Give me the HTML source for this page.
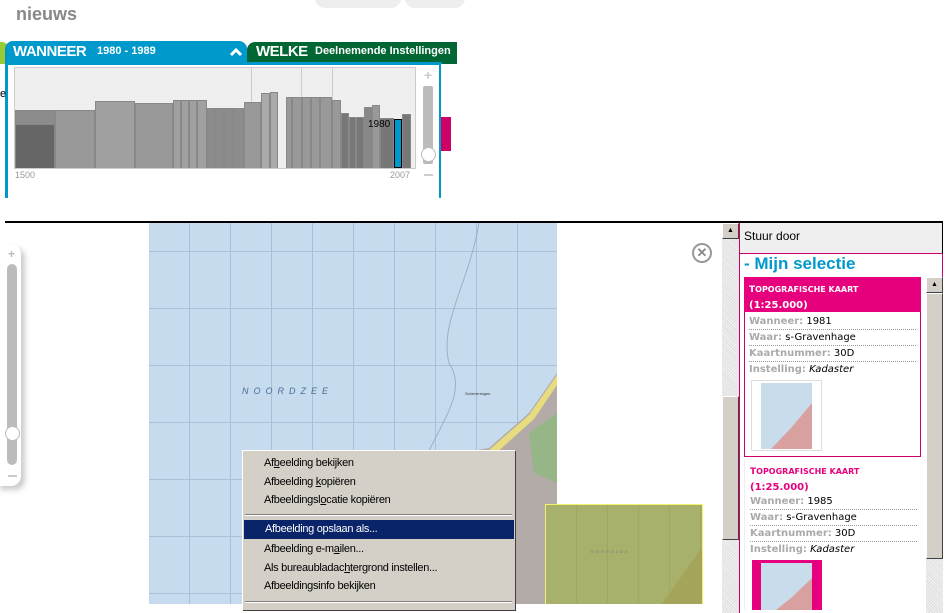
<!DOCTYPE html>
<html><head><meta charset="utf-8"><style>
*{margin:0;padding:0;box-sizing:border-box}
body{width:951px;height:613px;position:relative;background:#fff;font-family:"Liberation Sans",sans-serif;overflow:hidden}
.a{position:absolute}
.bar{position:absolute;bottom:0;border:1px solid #888;border-bottom:none}
.mi{position:absolute;left:0;width:272px;height:19px;font-size:11px;line-height:19px;padding-left:21px;color:#000;letter-spacing:-0.3px}
.row{position:absolute;left:5px;width:167px;height:16px;font-family:"DejaVu Sans",sans-serif;font-size:10px;line-height:15px;border-bottom:1px dotted #999;color:#000}
.row b{color:#aaa}
</style></head><body>
<!-- top -->
<div class="a" style="left:16px;top:4px;font-size:18px;font-weight:bold;color:#888">nieuws</div>
<div class="a" style="left:315px;top:-14px;width:86px;height:22px;border-radius:10px;background:#eee"></div>
<div class="a" style="left:405px;top:-14px;width:60px;height:22px;border-radius:10px;background:#eee"></div>
<div class="a" style="left:0;top:42px;width:8px;height:22px;background:#9c3;border-radius:0 6px 0 0"></div>
<div class="a" style="left:5px;top:41px;width:242px;height:24px;background:#0099cc;border-radius:8px 8px 0 0"></div>
<div class="a" style="left:13px;top:43px;color:#fff;font-weight:bold;font-size:15px;letter-spacing:-0.5px">WANNEER</div>
<div class="a" style="left:97px;top:45px;color:#fff;font-weight:bold;font-size:11px">1980 - 1989</div>
<svg class="a" style="left:229px;top:47px" width="14" height="10"><path d="M2 8 L7 3 L12 8" stroke="#fff" stroke-width="3" fill="none"/></svg>
<div class="a" style="left:247px;top:42px;width:210px;height:22px;background:#006633;border-radius:8px 0 0 0"></div>
<div class="a" style="left:256px;top:43px;color:#fff;font-weight:bold;font-size:15px;letter-spacing:-0.5px">WELKE</div>
<div class="a" style="left:315px;top:45px;color:#fff;font-weight:bold;font-size:11px;white-space:nowrap">Deelnemende Instellingen</div>
<div class="a" style="left:5px;top:62px;width:437px;height:136px;border:3px solid #0099cc;border-bottom:none;background:#fff"></div>
<div class="a" style="left:441px;top:64px;width:10px;height:134px;background:#fff"></div>
<div class="a" style="left:441px;top:117px;width:10px;height:34px;background:#c06"></div>
<div class="a" style="left:0;top:88px;width:5px;font-size:11px">e</div>
<div class="a" style="left:14px;top:67px;width:402px;height:102px;background:#efefef;border:1px solid #ccc;overflow:hidden">
 <div class="a" style="left:236px;top:0;width:1px;height:100px;background:#ccc"></div>
 <div class="a" style="left:286px;top:0;width:1px;height:100px;background:#ccc"></div>
 <div class="a" style="left:317px;top:0;width:1px;height:100px;background:#ccc"></div>
 <div class="bar" style="left:0;width:40px;height:58px;background:#8c8c8c"></div>
 <div class="bar" style="left:0;width:40px;height:44px;background:#666"></div>
 <div class="bar" style="left:40px;width:40px;height:58px;background:#999"></div>
 <div class="bar" style="left:80px;width:40px;height:67px;background:#a0a0a0"></div>
 <div class="bar" style="left:120px;width:38px;height:65px;background:#999"></div>
 <div class="bar" style="left:158px;width:8px;height:68px;background:#a0a0a0"></div>
 <div class="bar" style="left:166px;width:8px;height:68px;background:#a0a0a0"></div>
 <div class="bar" style="left:174px;width:8px;height:68px;background:#a0a0a0"></div>
 <div class="bar" style="left:182px;width:10px;height:68px;background:#a0a0a0"></div>
 <div class="bar" style="left:192px;width:8px;height:60px;background:#8c8c8c"></div>
 <div class="bar" style="left:200px;width:9px;height:60px;background:#8c8c8c"></div>
 <div class="bar" style="left:209px;width:9px;height:60px;background:#8c8c8c"></div>
 <div class="bar" style="left:218px;width:11px;height:60px;background:#8c8c8c"></div>
 <div class="bar" style="left:229px;width:17px;height:66px;background:#999"></div>
 <div class="bar" style="left:246px;width:9px;height:75px;background:#aaa"></div>
 <div class="bar" style="left:255px;width:8px;height:76px;background:#aaa"></div>
 <div class="bar" style="left:271px;width:6px;height:71px;background:#999"></div>
 <div class="bar" style="left:277px;width:10px;height:71px;background:#999"></div>
 <div class="bar" style="left:287px;width:9px;height:71px;background:#999"></div>
 <div class="bar" style="left:296px;width:9px;height:71px;background:#999"></div>
 <div class="bar" style="left:305px;width:12px;height:71px;background:#999"></div>
 <div class="bar" style="left:317px;width:9px;height:68px;background:#999"></div>
 <div class="bar" style="left:326px;width:8px;height:55px;background:#777"></div>
 <div class="bar" style="left:334px;width:7px;height:51px;background:#777"></div>
 <div class="bar" style="left:341px;width:8px;height:51px;background:#777"></div>
 <div class="bar" style="left:349px;width:8px;height:61px;background:#888"></div>
 <div class="bar" style="left:357px;width:8px;height:63px;background:#999"></div>
 <div class="bar" style="left:365px;width:14px;height:50px;background:#777"></div>
 <div class="bar" style="left:379px;width:8px;height:49px;background:#0099cc;border:1px solid #000"></div>
 <div class="bar" style="left:387px;width:9px;height:54px;background:#777"></div>
 <div class="a" style="left:353px;top:51px;font-size:10px">1980</div>
</div>
<div class="a" style="left:15px;top:170px;font-size:9px;color:#999">1500</div>
<div class="a" style="left:390px;top:170px;font-size:9px;color:#999">2007</div>
<div class="a" style="left:424px;top:67px;font-size:14px;font-weight:bold;color:#ccc">+</div>
<div class="a" style="left:423px;top:86px;width:10px;height:78px;background:#bbb;border-radius:2px"></div>
<div class="a" style="left:421px;top:147px;width:15px;height:15px;border-radius:50%;background:#fff;border:1px solid #bbb"></div>
<div class="a" style="left:424px;top:174px;width:9px;height:2px;background:#ccc"></div>
<!-- bottom line -->
<div class="a" style="left:5px;top:221px;width:938px;height:2px;background:#000"></div>
<!-- left slider -->
<div class="a" style="left:-4px;top:244px;width:25px;height:242px;background:#fff;border-radius:0 10px 10px 0;box-shadow:4px 4px 6px #ccc"></div>
<div class="a" style="left:8px;top:247px;font-size:12px;font-weight:bold;color:#bbb">+</div>
<div class="a" style="left:7px;top:264px;width:10px;height:201px;background:#bbb;border-radius:5px"></div>
<div class="a" style="left:5px;top:426px;width:15px;height:15px;border-radius:50%;background:#fff;border:1px solid #bbb"></div>
<div class="a" style="left:8px;top:475px;width:9px;height:2px;background:#ccc"></div>
<!-- map -->
<div class="a" style="left:149px;top:223px;width:408px;height:381px;background:#c6dcee;background-image:repeating-linear-gradient(90deg,transparent 0,transparent 40px,#a9bfd6 40px,#a9bfd6 41px),repeating-linear-gradient(180deg,transparent 0,transparent 28px,#abc0d6 28px,#abc0d6 29px,transparent 29px,transparent 57px);overflow:hidden">
 <svg class="a" style="left:0;top:0" width="408" height="381">
  <path d="M330 0 C320 60 290 100 300 140 C320 170 290 200 270 250 C250 300 200 330 150 360 C120 370 100 380 95 381" stroke="#9bb0c6" fill="none"/>
  <polygon points="408,150 380,190 340,225 300,232 285,300 272,381 408,381" fill="#b3aba8"/>
  <polygon points="408,140 408,152 380,192 340,227 302,234 288,300 290,305 306,240 345,232 385,196 408,162" fill="#e8dc80"/>
  <polygon points="380,210 408,190 408,260 385,250" fill="#8cba7a" opacity="0.7"/>
  <text x="93" y="171" font-family="Liberation Sans" font-style="italic" font-size="9" fill="#4a6f95" letter-spacing="5">NOORDZEE</text>
  <text x="316" y="172" font-family="Liberation Sans" font-size="4" fill="#333">Scheveningen</text>
 </svg>
</div>
<!-- close icon -->
<div class="a" style="left:692px;top:243px;width:20px;height:20px;border-radius:50%;border:2px solid #999;color:#888;font-size:13px;font-weight:bold;text-align:center;line-height:16px">✕</div>
<!-- minimap -->
<div class="a" style="left:545px;top:504px;width:158px;height:100px;background:#a8b16c;border:1px solid #f5f06a;border-bottom:none;overflow:hidden;background-image:repeating-linear-gradient(90deg,transparent 0,transparent 30px,#9ea866 30px,#9ea866 31px)">
 <svg width="158" height="100"><polygon points="158,40 140,65 115,100 158,100" fill="#a4a45a"/><text x="45" y="48" font-size="4" fill="#777" letter-spacing="2">NOORDZEE</text></svg>
</div>
<!-- context menu -->
<div class="a" style="left:242px;top:450px;width:273px;height:160px;background:#d4d0c8;border-top:1px solid #fff;border-left:1px solid #fff;box-shadow:1px 1px 0 #404040">
 <div class="mi" style="top:3px">Af<u>b</u>eelding bekijken</div>
 <div class="mi" style="top:22px">Afbeelding <u>k</u>opiëren</div>
 <div class="mi" style="top:40px">Afbeeldingsl<u>o</u>catie kopiëren</div>
 <div class="a" style="left:2px;top:63px;width:267px;height:2px;border-top:1px solid #808080;border-bottom:1px solid #fff"></div>
 <div class="mi" style="top:69px;left:1px;width:270px;background:#0a246a;color:#fff">Afbeelding opslaan als...</div>
 <div class="mi" style="top:89px">Afbeelding e-m<u>a</u>ilen...</div>
 <div class="mi" style="top:108px">Als bureaubladac<u>h</u>tergrond instellen...</div>
 <div class="mi" style="top:126px">Afbeeldingsinfo bekijken</div>
 <div class="a" style="left:2px;top:150px;width:267px;height:2px;border-top:1px solid #808080;border-bottom:1px solid #fff"></div>
</div>
<!-- outer scrollbar -->
<div class="a" style="left:722px;top:223px;width:17px;height:390px;background:#eee;background-image:repeating-linear-gradient(45deg,#ddd 0,#ddd 1px,#f4f4f4 1px,#f4f4f4 2px)"></div>
<div class="a" style="left:722px;top:223px;width:17px;height:16px;background:#d4d0c8;border:1px solid;border-color:#fff #404040 #404040 #fff;font-size:7px;text-align:center;line-height:13px">▲</div>
<div class="a" style="left:722px;top:396px;width:17px;height:144px;background:#d4d0c8;border:1px solid;border-color:#fff #404040 #404040 #fff"></div>
<!-- right panel -->
<div class="a" style="left:739px;top:223px;width:204px;height:390px;border-left:1px solid #c06;border-right:1px solid #c06"></div>
<div class="a" style="left:740px;top:223px;width:203px;height:31px;background:#efefef;border-right:1px solid #000;border-bottom:1px solid #c06;font-size:12px;line-height:26px;padding-left:4px">Stuur door</div>
<div class="a" style="left:744px;top:254px;font-size:17px;font-weight:bold;color:#0099cc">- Mijn selectie</div>
<div class="a" style="left:744px;top:277px;width:177px;height:180px;border:1px solid #c06"></div>
<div class="a" style="left:744px;top:277px;width:177px;height:35px;background:#e6007e;color:#fff;font-family:'DejaVu Sans',sans-serif;font-weight:bold;font-size:9px;padding:5px 0 0 5px;line-height:15px">T<span style="font-size:8px">OPOGRAFISCHE KAART</span><br><span style="font-size:10px">(1:25.000)</span></div>
<div class="a" style="left:744px;top:312px;width:177px;height:145px">
 <div class="row" style="top:2px"><b>Wanneer:</b> 1981</div>
 <div class="row" style="top:18px"><b>Waar:</b> s-Gravenhage</div>
 <div class="row" style="top:34px"><b>Kaartnummer:</b> 30D</div>
 <div class="row" style="top:50px;border:none"><b>Instelling:</b> <i>Kadaster</i></div>
 <div class="a" style="left:7px;top:68px;width:71px;height:71px;border:1px solid #ddd;background:#fff">
  <div class="a" style="left:9px;top:2px;width:51px;height:66px;background:#c8dcec;overflow:hidden"><svg width="51" height="66"><polygon points="51,20 30,45 10,66 51,66" fill="#d9a0a0"/></svg></div>
 </div>
</div>
<div class="a" style="left:744px;top:460px;width:177px;height:150px;border-left:1px solid #eee">
 <div class="a" style="left:5px;top:4px;color:#e6007e;font-family:'DejaVu Sans',sans-serif;font-weight:bold;font-size:9px;line-height:15px">T<span style="font-size:8px">OPOGRAFISCHE KAART</span><br><span style="font-size:10px">(1:25.000)</span></div>
 <div class="row" style="top:34px"><b>Wanneer:</b> 1985</div>
 <div class="row" style="top:50px"><b>Waar:</b> s-Gravenhage</div>
 <div class="row" style="top:66px"><b>Kaartnummer:</b> 30D</div>
 <div class="row" style="top:82px;border:none"><b>Instelling:</b> <i>Kadaster</i></div>
 <div class="a" style="left:7px;top:100px;width:70px;height:50px;background:#e6007e">
  <div class="a" style="left:9px;top:3px;width:51px;height:47px;background:#c8dcec;overflow:hidden"><svg width="51" height="47"><polygon points="51,15 30,35 15,47 51,47" fill="#d9a0a0"/></svg></div>
 </div>
</div>
<!-- inner scrollbar -->
<div class="a" style="left:926px;top:277px;width:17px;height:336px;background:#eee;background-image:repeating-linear-gradient(45deg,#ddd 0,#ddd 1px,#f4f4f4 1px,#f4f4f4 2px)"></div>
<div class="a" style="left:926px;top:277px;width:17px;height:16px;background:#d4d0c8;border:1px solid;border-color:#fff #404040 #404040 #fff;font-size:7px;text-align:center;line-height:13px">▲</div>
<div class="a" style="left:926px;top:293px;width:17px;height:266px;background:#d4d0c8;border:1px solid;border-color:#fff #404040 #404040 #fff"></div>
</body></html>
